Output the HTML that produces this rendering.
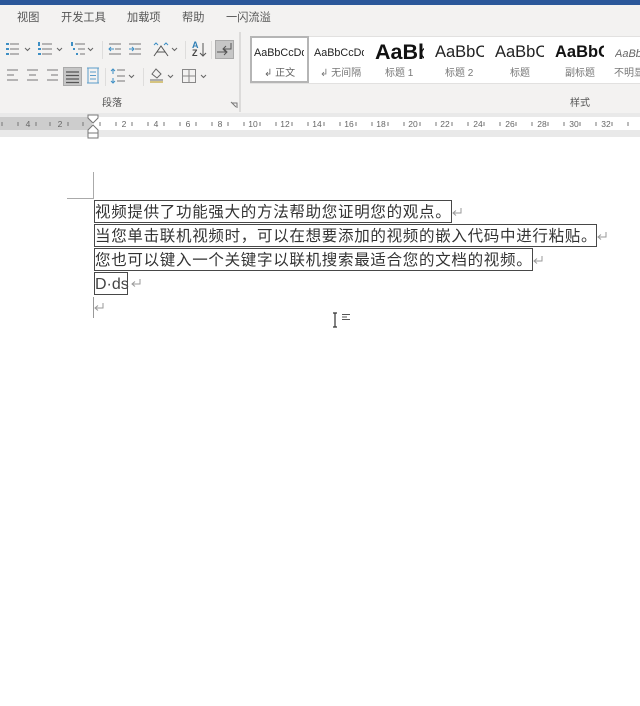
<!DOCTYPE html>
<html lang="zh"><head><meta charset="utf-8">
<style>
html,body{margin:0;padding:0;background:#fff;}
#p{position:relative;width:640px;height:706px;overflow:hidden;background:#fff;font-family:"Liberation Sans","Noto Sans CJK SC",sans-serif;filter:blur(.35px);}
.a{position:absolute;white-space:nowrap;}
.tab{top:11px;font-size:11.2px;color:#555;line-height:14px;}
.sp{font-size:13px;color:#222;line-height:18px;top:43px;overflow:hidden;}
.sl{top:67px;font-size:10px;line-height:13px;color:#777;}
.box{position:absolute;left:94px;height:21px;border:1.4px solid #484848;box-sizing:content-box;font-size:15.5px;letter-spacing:.7px;line-height:23px;text-indent:0;color:#333;white-space:nowrap;}
.rn{position:absolute;top:118px;font-size:8.5px;line-height:12px;color:#666;width:16px;text-align:center;}
svg{position:absolute;overflow:visible;}
</style></head><body><div id="p">
<div class="a" style="left:0;top:0;width:640px;height:5px;background:#2b579a"></div>
<div class="a" style="left:0;top:5px;width:640px;height:108px;background:#f3f2f1"></div>
<div class="a tab" style="left:17px">视图</div>
<div class="a tab" style="left:61px">开发工具</div>
<div class="a tab" style="left:127px">加载项</div>
<div class="a tab" style="left:182px">帮助</div>
<div class="a tab" style="left:226px">一闪流溢</div>

<div class="a" style="left:63px;top:67px;width:19px;height:19px;background:#c6c6c6;border:1px solid #aaa;box-sizing:border-box"></div>
<div class="a" style="left:215px;top:40px;width:19px;height:19px;background:#c6c6c6;border:1px solid #aaa;box-sizing:border-box"></div>
<svg width="240" height="80" style="left:0;top:32px" fill="none" stroke="#666" stroke-width="1">
<path d="M10 12h9M10 17h9M10 22h9M42 12h10M42 17h10M42 22h10M75 12h10M78 17h7M80 22h5" stroke="#777"/>
<path d="M6 12h3M6 17h3M6 22h3M39 10v4M38 17h3M38 22h3M72 10v4M73 17h2M76 22h2" stroke="#3e8fc4" stroke-width="2"/>
<path d="M25 16l2.500 2.500 2.500-2.500M57 16l2.500 2.500 2.500-2.500M88 16l2.500 2.500 2.500-2.500M172 16l2.500 2.500 2.500-2.500" stroke="#666"/>
<path d="M109 12h12M115 17h6M109 22h12M129 12h12M135 17h6M129 22h12" stroke="#777"/>
<path d="M109 17h5M111 15l-2 2 2 2M129 17h5M132 15l2 2-2 2" stroke="#3e8fc4"/>
<path d="M154 24l7-10 7 10M157 20h8" stroke="#555"/>
<path d="M154 13l2-2 2 2M164 13l2-2 2 2" stroke="#3e8fc4"/>
<path d="M203 11v13M200 21l3 3 3-3" stroke="#555"/>
<path d="M231 11v6h-8M226 14l-3 3 3 3M217 20h10M224 17l3 3-3 3" stroke="#555"/>
<path d="M102.500 9v18M185.500 9v18M211.500 9v18M105.500 36v18M143.500 36v18" stroke="#dedddc"/>
<path d="M7 38h11M7 43h7M7 48h11M27 38h11M29 43h7M27 48h11M47 38h11M51 43h7M47 48h11" stroke="#777"/>
<path d="M66 40h13M66 43.500h13M66 47h13M66 50.500h13" stroke="#555" stroke-width="1.300"/>
<path d="M87 36h12M87 51h12M88 36v15M98 36v15M90 40h6M90 43.500h6M90 47h6" stroke="#5b9cc9"/>
<path d="M113 37v5M113 46v5M111 39l2-2 2 2M111 49l2 2 2-2" stroke="#3e8fc4"/>
<path d="M117 38h8M117 44h8M117 49h8" stroke="#777"/>
<path d="M129 43l2.500 2.500 2.500-2.500M168 43l2.500 2.500 2.500-2.500M201 43l2.500 2.500 2.500-2.500" stroke="#666"/>
<path d="M152 42l4-5 5 5-4 4zM150 48h13" stroke="#666"/>
<path d="M150 50h13" stroke="#d5c480" stroke-width="2"/>
<path d="M182.500 37.500h13v13h-13zM189 37.500v13M182.500 44h13" stroke="#888"/>
<path d="M232 71h5v5M231 70l5 5" stroke="#777"/>
</svg>
<div class="a" style="left:192px;top:41px;font-size:9px;line-height:9px;color:#2f7fb5;font-weight:bold">A</div>
<div class="a" style="left:192px;top:49px;font-size:9px;line-height:9px;color:#444;font-weight:bold">Z</div>
<div class="a" style="left:102px;top:97px;font-size:10px;line-height:13px;color:#555">段落</div>
<div class="a" style="left:570px;top:97px;font-size:10px;line-height:13px;color:#555">样式</div>
<div class="a" style="left:239px;top:32px;width:2px;height:80px;background:#dcdbda"></div>

<div class="a" style="left:250px;top:36px;width:390px;height:48px;background:#fff;border-top:1px solid #e2e1e0;border-bottom:1px solid #e2e1e0;box-sizing:border-box"></div>
<div class="a" style="left:250px;top:36px;width:59px;height:47px;border:2px solid #b5b5b5;box-sizing:border-box;background:#fff"></div>
<div class="a sp" style="left:254px;width:50px;font-size:10.800px;top:44px">AaBbCcDd</div>
<div class="a sp" style="left:314px;width:50px;font-size:10.800px;top:44px">AaBbCcDd</div>
<div class="a sp" style="left:375px;width:49px;font-size:21.500px;font-weight:bold;top:40px;line-height:24px;color:#111">AaBb</div>
<div class="a sp" style="left:435px;width:49px;font-size:16.500px;top:42px;line-height:20px">AaBbC</div>
<div class="a sp" style="left:495px;width:49px;font-size:16.500px;top:42px;line-height:20px">AaBbC</div>
<div class="a sp" style="left:555px;width:49px;font-size:16.500px;top:42px;line-height:20px;font-weight:bold;color:#111">AaBbC</div>
<div class="a sp" style="left:615px;width:25px;font-size:11px;top:45px;font-style:italic;color:#666">AaBb</div>
<div class="a sl" style="left:264px;color:#666">↲ 正文</div>
<div class="a sl" style="left:320px">↲ 无间隔</div>
<div class="a sl" style="left:385px">标题 1</div>
<div class="a sl" style="left:445px">标题 2</div>
<div class="a sl" style="left:510px">标题</div>
<div class="a sl" style="left:565px">副标题</div>
<div class="a sl" style="left:614px">不明显强调</div>

<div class="a" style="left:0;top:113px;width:640px;height:24px;background:#e9e9e9"></div>
<div class="a" style="left:0;top:117px;width:640px;height:13px;background:#fff"></div>
<div class="a" style="left:0;top:117px;width:92px;height:13px;background:#cdcdcd"></div>
<div class="rn" style="left:20px">4</div><div class="rn" style="left:52px">2</div>
<div class="rn" style="left:116px">2</div><div class="rn" style="left:148px">4</div><div class="rn" style="left:180px">6</div><div class="rn" style="left:212px">8</div>
<div class="rn" style="left:245px">10</div><div class="rn" style="left:277px">12</div><div class="rn" style="left:309px">14</div><div class="rn" style="left:341px">16</div><div class="rn" style="left:373px">18</div><div class="rn" style="left:405px">20</div><div class="rn" style="left:437px">22</div><div class="rn" style="left:470px">24</div><div class="rn" style="left:502px">26</div><div class="rn" style="left:534px">28</div><div class="rn" style="left:566px">30</div><div class="rn" style="left:598px">32</div>
<svg width="640" height="14" style="left:0;top:117px" fill="none" stroke="#777">
<path d="M2 5v4M18 5v4M36 5v4M50 5v4M68 5v4M83 5v4M100 5v4M116 5v4M132 5v4M148 5v4M164 5v4M180 5v4M196 5v4M212 5v4M228 5v4M244 5v4M260 5v4M276 5v4M292 5v4M308 5v4M324 5v4M340 5v4M356 5v4M372 5v4M388 5v4M404 5v4M420 5v4M436 5v4M452 5v4M468 5v4M484 5v4M500 5v4M516 5v4M532 5v4M548 5v4M564 5v4M580 5v4M596 5v4M612 5v4M628 5v4"/>
</svg>
<svg width="14" height="26" style="left:86px;top:113px" fill="#fff" stroke="#777">
<path d="M2 2h10v3l-5 5-5-5z"/><path d="M7 12l5 5v3H2v-3z"/><path d="M2 20h10v5H2z"/>
</svg>

<svg width="30" height="150" style="left:66px;top:170px" fill="none" stroke="#aaa">
<path d="M27.500 2v27M1 28.500h27"/>
<path d="M27.500 127v21" stroke="#999"/>
</svg>
<div class="box" style="top:200px;width:356px">视频提供了功能强大的方法帮助您证明您的观点。</div>
<div class="box" style="top:224px;width:501px">当您单击联机视频时，可以在想要添加的视频的嵌入代码中进行粘贴。</div>
<div class="box" style="top:248px;width:437px">您也可以键入一个关键字以联机搜索最适合您的文档的视频。</div>
<div class="box" style="top:272px;width:32px;font-size:16px;letter-spacing:0;color:#444">D·ds</div>
<svg width="640" height="130" style="left:0;top:200px" fill="none" stroke="#999">
<path d="M461 8v5h-8M456 10.500l-3 2.500 3 2.500"/>
<path d="M606 32v5h-8M601 34.500l-3 2.500 3 2.500"/>
<path d="M542 56v5h-8M537 58.500l-3 2.500 3 2.500"/>
<path d="M140 79v5h-8M135 81.500l-3 2.500 3 2.500"/>
<path d="M103 103v5h-8M98 105.500l-3 2.500 3 2.500"/>
<path d="M333 113h4M333 127h4M335 113v14" stroke="#333" stroke-width="1.200"/>
<path d="M342 114.500h8M342 117h5M342 119.500h8" stroke="#555"/>
</svg>
</div></body></html>
